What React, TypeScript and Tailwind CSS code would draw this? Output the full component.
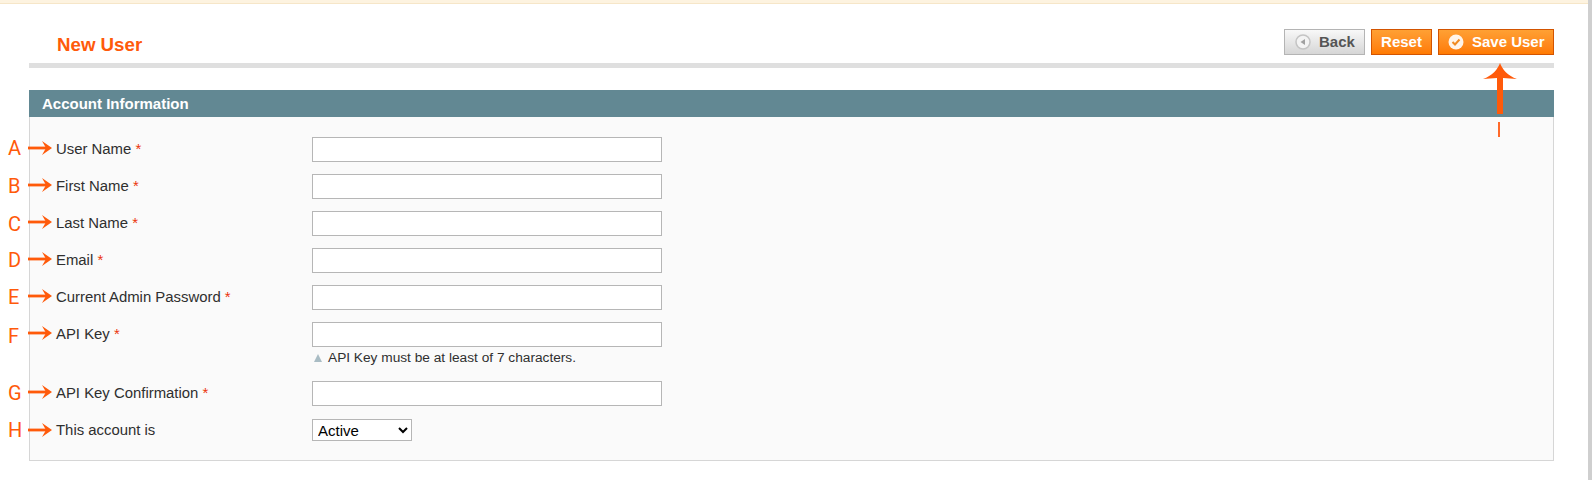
const rows = [
  { k: "A", label: "User Name", h: "h-[37px]", top: "top-[0px]" },
  { k: "B", label: "First Name", h: "h-[37px]", top: "top-[1px]" },
  { k: "C", label: "Last Name", h: "h-[37px]", top: "top-[2px]" },
  { k: "D", label: "Email", h: "h-[37px]", top: "top-[1px]" },
  { k: "E", label: "Current Admin Password", h: "h-[37px]", top: "top-[1px]" },
  { k: "F", label: "API Key", h: "h-[59px]", note: true, top: "top-[3px]" },
  { k: "G", label: "API Key Confirmation", h: "h-[38px]", top: "top-[1px]" },
];

function Arrow() {
  return (
    <svg width="24" height="16" viewBox="0 0 24 16" className="absolute left-[28px] top-[3px]">
      <path d="M0 6.6h18v2.8H0z" fill="#ff5a0a" />
      <path d="M14 1 L24 8 L14 15 L18 8 Z" fill="#ff5a0a" />
    </svg>
  );
}

function Letter({ k, top }: { k: string; top: string }) {
  return (
    <span className={`absolute left-[8px] ${top} text-[20px] leading-[23px] font-normal text-[#ff5a0a] font-['Roboto',sans-serif]`}>
      {k}
    </span>
  );
}

function Row({ k, label, h, note, top }: { k: string; label: string; h: string; note?: boolean; top: string }) {
  return (
    <div className={`relative flex ${h}`}>
      <Letter k={k} top={top} />
      <Arrow />
      <div className="ml-[56px] w-[256px] pt-[3px] text-[14.9px] leading-[18px] text-[#2f2f2f]">
        {label} <span className="text-[#eb340a]">*</span>
      </div>
      <div>
        <input className="block w-[350px] h-[25px] border border-[#b6b6b6] bg-white" />
        {note && (
          <div className="flex items-center mt-[3px] text-[13.7px] leading-[16px] text-[#2f2f2f]">
            <span className="w-0 h-0 mr-[6px] ml-[2px] border-x-[4px] border-x-transparent border-b-[8px] border-b-[#a9bcc4]" />
            API Key must be at least of 7 characters.
          </div>
        )}
      </div>
    </div>
  );
}

export default function App() {
  return (
    <div className="relative w-[1592px] h-[480px] overflow-hidden bg-white font-['Liberation_Sans',Arial,sans-serif]">
      <div className="h-[4px] bg-[#fdf3e0] border-b border-[#f6e6c8]" />
      <div className="ml-[29px] w-[1525px]">
        <div className="flex justify-between items-start h-[64px] border-b-[5px] border-[#dfdfdf]">
          <h1 className="ml-[28px] mt-[30px] text-[18.7px] leading-[22px] font-bold text-[#ff5a0a]">New User</h1>
          <div className="flex gap-[6px] mt-[25px]">
            <button className="flex items-center h-[26px] w-[81px] pl-[10px] border border-[#b4b4b4] bg-gradient-to-b from-[#f8f8f8] to-[#d6d6d6] text-[15px] font-bold text-[#555]">
              <svg width="16" height="16" viewBox="0 0 16 16" className="mr-[8px]">
                <circle cx="8" cy="8" r="7" fill="#f3f3f3" stroke="#c4c4c4" strokeWidth="1.5" />
                <path d="M10 5 L5.5 8 L10 11 Z" fill="#a0a0a0" />
              </svg>
              Back
            </button>
            <button className="h-[26px] w-[61px] border border-[#d35400] bg-gradient-to-b from-[#ffa033] to-[#ff7a00] text-[15px] font-bold text-white">
              Reset
            </button>
            <button className="flex items-center h-[26px] w-[116px] pl-[9px] border border-[#d35400] bg-gradient-to-b from-[#ffa033] to-[#ff7a00] text-[15px] font-bold text-white">
              <svg width="16" height="16" viewBox="0 0 16 16" className="mr-[8px]">
                <circle cx="8" cy="8" r="7.5" fill="#fff" fillOpacity="0.9" />
                <path d="M4.5 8 L7 10.5 L11.5 5.5" fill="none" stroke="#f08a20" strokeWidth="2" />
              </svg>
              Save User
            </button>
          </div>
        </div>
        <div className="mt-[22px] h-[27px] bg-[#628893] pl-[13px] text-[15px] leading-[28px] font-bold text-white">
          Account Information
        </div>
        <div className="relative -ml-[29px] pl-[29px] h-[344px]">
          <div className="absolute left-[29px] top-0 w-[1525px] h-[344px] bg-[#fafafa] border border-t-0 border-[#d6d6d6]" />
          <div className="relative -ml-[29px] pt-[20px]">
            {rows.map((r) => (
              <Row key={r.k} {...r} />
            ))}
            <div className="relative flex h-[24px]">
              <Letter k="H" top="top-[0px]" />
              <Arrow />
              <div className="ml-[56px] w-[256px] pt-[2px] text-[14.9px] leading-[18px] text-[#2f2f2f]">This account is</div>
              <select className="w-[100px] h-[22px] pl-[1px] border border-[#b6b6b6] bg-white text-[15px] text-black">
                <option>Active</option>
              </select>
            </div>
          </div>
        </div>
      </div>
      <svg width="36" height="64" viewBox="0 0 36 64" className="absolute left-[1482px] top-[63px]">
        <path d="M18 0 C20 6 26 13 35 16 L21 15 L21 51 L15 51 L15 15 L1 16 C10 13 16 6 18 0 Z" fill="#ff5a0a" />
      </svg>
      <span className="absolute left-[1498px] top-[122px] w-[2px] h-[15px] bg-[#ff6a2a]" />
      <div className="absolute right-0 top-0 w-[4px] h-[480px] bg-[#cfcfcf]" />
    </div>
  );
}
